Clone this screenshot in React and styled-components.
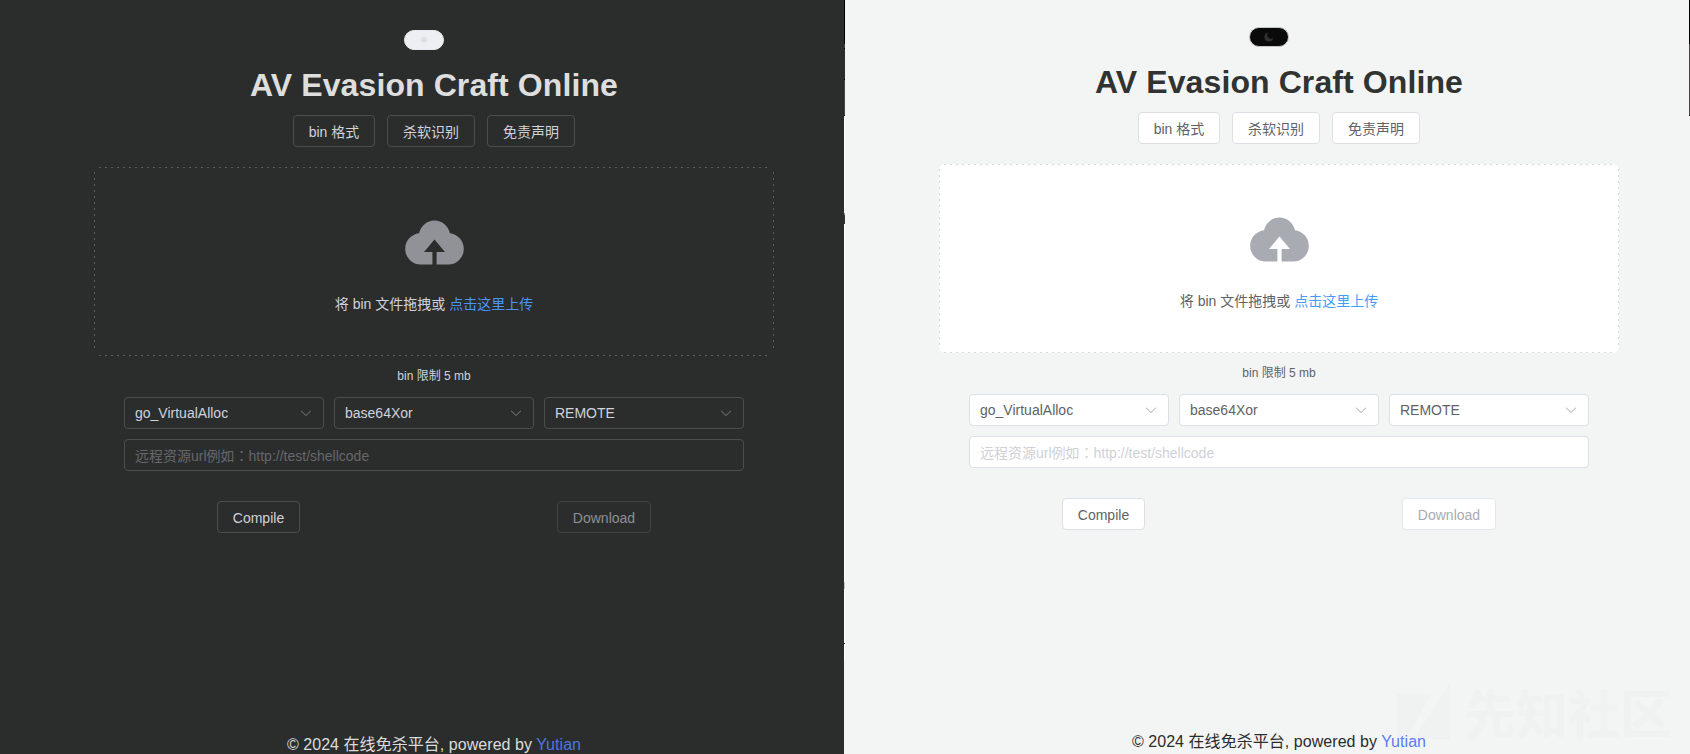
import React from "react";
import styled, { createGlobalStyle, ThemeProvider } from "styled-components";

const dark = {
  page: "#2b2d2c", title: "#dedede", text: "#cfd3dc", footer: "#dcdcdc",
  fill: "transparent", border: "#4c4d4f", disabledBorder: "#414243", disabledText: "#8d9095",
  placeholder: "#65676b", arrow: "#77797d", cloud: "#909297", link: "#4a94fb", author: "#4f74e3",
  toggleFill: "#eeeff3", toggleBorder: "#e8e9f1", glyph: "#dedede", top: 30, dash: "#5a5b5d",
};

const light = {
  page: "#f3f5f4", title: "#303331", text: "#606266", footer: "#2c2c2c",
  fill: "#ffffff", border: "#dcdfe6", disabledBorder: "#e4e7ed", disabledText: "#a8abb2",
  placeholder: "#cfd1d6", arrow: "#a8abb2", cloud: "#a8abb2", link: "#409eff", author: "#5b7cf5",
  toggleFill: "#0a0a0a", toggleBorder: "#c4c6c9", glyph: "#2f3130", top: 27, dash: "#d6d9df",
};

const Global = createGlobalStyle`
  * { box-sizing: border-box; }
  body { margin: 0; overflow: hidden; }
  button, input { font: inherit; }
`;

const Screen = styled.main`
  display: grid;
  grid-template-columns: 844px 1px 844px 1px;
  width: 1690px;
  height: 754px;
  overflow: hidden;
  font-family: "Liberation Sans", "Noto Sans CJK SC", sans-serif;
  font-size: 14px;
`;

const Edge = styled.div`
  background: ${(p) => p.$paint};
`;

const Panel = styled.section`
  position: relative;
  display: flex;
  flex-direction: column;
  height: 754px;
  overflow: hidden;
  padding: ${(p) => p.theme.top}px 70px 0 94px;
  background: ${(p) => p.theme.page};
  color: ${(p) => p.theme.text};
  & > * { flex-shrink: 0; }
`;

const Toggle = styled.button`
  align-self: center;
  display: flex;
  align-items: center;
  justify-content: center;
  width: 40px;
  height: 20px;
  margin: 0 20px 0 0;
  padding: 0;
  border: 1px solid ${(p) => p.theme.toggleBorder};
  border-radius: 10px;
  background: ${(p) => p.theme.toggleFill};
  color: ${(p) => p.theme.glyph};
`;

const Title = styled.h1`
  margin: 15px 0 0;
  font-size: 32px;
  line-height: 40px;
  font-weight: 700;
  letter-spacing: 0.1px;
  text-align: center;
  white-space: nowrap;
  color: ${(p) => p.theme.title};
`;

const Links = styled.nav`
  display: flex;
  justify-content: center;
  gap: 12px;
  margin-top: 10px;
`;

const Button = styled.button`
  width: ${(p) => p.$width}px;
  height: 32px;
  padding: 0;
  border: 1px solid ${(p) => (p.disabled ? p.theme.disabledBorder : p.theme.border)};
  border-radius: 4px;
  background: ${(p) => p.theme.fill};
  color: ${(p) => (p.disabled ? p.theme.disabledText : p.theme.text)};
  white-space: nowrap;
`;

const Dropzone = styled.div`
  --h: repeating-linear-gradient(90deg, ${(p) => p.theme.dash} 0 2px, transparent 2px 6px);
  --v: repeating-linear-gradient(180deg, ${(p) => p.theme.dash} 0 2px, transparent 2px 6px);
  display: flex;
  flex-direction: column;
  align-items: center;
  height: 189px;
  margin-top: 20px;
  padding-top: 41px;
  border-radius: 6px;
  background-color: ${(p) => p.theme.fill};
  background-image: var(--h), var(--h), var(--v), var(--v);
  background-position: 5px 0, 5px 100%, 0 5px, 100% 5px;
  background-size: calc(100% - 10px) 1px, calc(100% - 10px) 1px, 1px calc(100% - 10px), 1px calc(100% - 10px);
  background-repeat: no-repeat;
`;

const Cloud = styled.svg`
  width: 67px;
  height: 67px;
  color: ${(p) => p.theme.cloud};
`;

const Prompt = styled.p`
  margin: 17px 0 0;
  line-height: 24px;
`;

const UploadLink = styled.span`
  color: ${(p) => p.theme.link};
`;

const Tip = styled.p`
  margin: 11px 0 0;
  font-size: 12px;
  line-height: 18px;
  text-align: center;
`;

const Form = styled.div`
  display: grid;
  grid-template-columns: repeat(3, 200px);
  gap: 10px;
  margin: 12px 30px 0;
`;

const Select = styled.div`
  display: flex;
  align-items: center;
  justify-content: space-between;
  height: 32px;
  padding: 0 10px;
  border: 1px solid ${(p) => p.theme.border};
  border-radius: 4px;
  background: ${(p) => p.theme.fill};
`;

const Arrow = styled.svg`
  width: 14px;
  height: 14px;
  color: ${(p) => p.theme.arrow};
`;

const UrlInput = styled.input`
  grid-column: 1 / -1;
  height: 32px;
  padding: 1px 10px 0;
  border: 1px solid ${(p) => p.theme.border};
  border-radius: 4px;
  background: ${(p) => p.theme.fill};
  color: inherit;
  font-family: "Liberation Sans", "Noto Sans CJK TC", sans-serif;
  &::placeholder { color: ${(p) => p.theme.placeholder}; opacity: 1; }
`;

const Actions = styled.div`
  display: grid;
  grid-template-columns: 329px 362px;
  justify-content: start;
  justify-items: center;
  margin-top: 30px;
  ${Button} { padding-top: 1px; }
`;

const Footer = styled.footer`
  position: relative;
  z-index: 1;
  margin: 199px 0 0;
  font-size: 16px;
  line-height: 25px;
  letter-spacing: 0.05px;
  text-align: center;
  white-space: nowrap;
  color: ${(p) => p.theme.footer};
`;

const Author = styled.span`
  color: ${(p) => p.theme.author};
`;

const Watermark = styled.div`
  position: absolute;
  right: 17px;
  bottom: 7px;
  display: flex;
  align-items: center;
  gap: 13px;
  height: 70px;
  color: #f0f2f1;
  font: 700 52px/70px "Noto Sans CJK SC", sans-serif;
  text-shadow: 0 0 1px #eceeed;
`;

function Chevron() {
  return (
    <Arrow viewBox="0 0 1024 1024" fill="currentColor">
      <path d="M831.872 340.864 512 652.672 192.128 340.864a30.592 30.592 0 0 0-42.752 0 29.12 29.12 0 0 0 0 41.6L489.664 714.24a32 32 0 0 0 44.672 0l340.288-331.712a29.12 29.12 0 0 0 0-41.728 30.592 30.592 0 0 0-42.752 0z" />
    </Arrow>
  );
}

function Sun() {
  return (
    <svg width="12" height="12" viewBox="0 0 12 12" fill="currentColor">
      <circle cx="6" cy="5.7" r="2.9" />
      <path d="M6 .6v1.1M6 10.3v1.1M.6 6h1.1M10.3 6h1.1M2.2 2.2l.7.7M9.1 9.1l.7.7M9.8 2.2l-.7.7M2.9 9.1l-.7.7" stroke="currentColor" strokeWidth=".9" />
    </svg>
  );
}

function Moon() {
  return (
    <svg width="12" height="12" viewBox="0 0 12 12" fill="currentColor">
      <path d="M5.4 1.5A4.5 4.5 0 1 0 10.3 6.6 2.8 2.8 0 0 1 5.4 1.5z" />
    </svg>
  );
}

function CraftPanel({ theme, icon, children }) {
  return (
    <ThemeProvider theme={theme}>
      <Panel>
        <Toggle>{icon}</Toggle>
        <Title>AV Evasion Craft Online</Title>
        <Links>
          <Button $width={82}>bin 格式</Button>
          <Button $width={88}>杀软识别</Button>
          <Button $width={88}>免责声明</Button>
        </Links>
        <Dropzone>
          <Cloud viewBox="0 0 1024 1024" fill="currentColor">
            <path d="M544 864V672h128L512 480 352 672h128v192H320v-1.6c-5.376.32-10.496 1.6-16 1.6A240 240 0 0 1 64 624c0-123.136 93.12-223.488 212.608-237.248A239.808 239.808 0 0 1 512 192a239.872 239.872 0 0 1 235.456 194.752c119.488 13.76 212.48 114.112 212.48 237.248a240 240 0 0 1-240 240c-5.376 0-10.56-1.28-16-1.6v1.6H544z" />
          </Cloud>
          <Prompt>将 bin 文件拖拽或 <UploadLink>点击这里上传</UploadLink></Prompt>
        </Dropzone>
        <Tip>bin 限制 5 mb</Tip>
        <Form>
          {["go_VirtualAlloc", "base64Xor", "REMOTE"].map((value) => (
            <Select key={value}><span>{value}</span><Chevron /></Select>
          ))}
          <UrlInput placeholder="远程资源url例如：http://test/shellcode" />
        </Form>
        <Actions>
          <Button $width={83}>Compile</Button>
          <Button $width={94} disabled>Download</Button>
        </Actions>
        <Footer>© 2024 在线免杀平台, powered by <Author>Yutian</Author></Footer>
        {children}
      </Panel>
    </ThemeProvider>
  );
}

export default function App() {
  return (
    <Screen>
      <Global />
      <CraftPanel theme={dark} icon={<Sun />} />
      <Edge $paint="linear-gradient(#000 0 44px, #444 44px 48px, #000 48px 49px, #2b2d2c 49px 79px, #000 79px 80px, #444746 80px 115px, #000 115px 116px, #fff 116px 213px, #8a8a8a 213px 215px, #333 215px 224px, #fff 224px 582px, #c8c8c8 582px 589px, #fff 589px 643px, #222 643px 644px, #fff 644px 660px, #f3f5f4 660px)" />
      <CraftPanel theme={light} icon={<Moon />}>
        <Watermark>
          <svg width="54" height="56" viewBox="0 0 54 56" fill="currentColor" stroke="#eceeed" strokeWidth=".5">
            <path d="M0 10h34L8 55H0zM53 0v55H18z" />
          </svg>
          先知社区
        </Watermark>
      </CraftPanel>
      <Edge $paint="linear-gradient(#000 0 44px, #4a4748 44px 115px, #000 115px 116px, #f3f5f4 116px)" />
    </Screen>
  );
}
